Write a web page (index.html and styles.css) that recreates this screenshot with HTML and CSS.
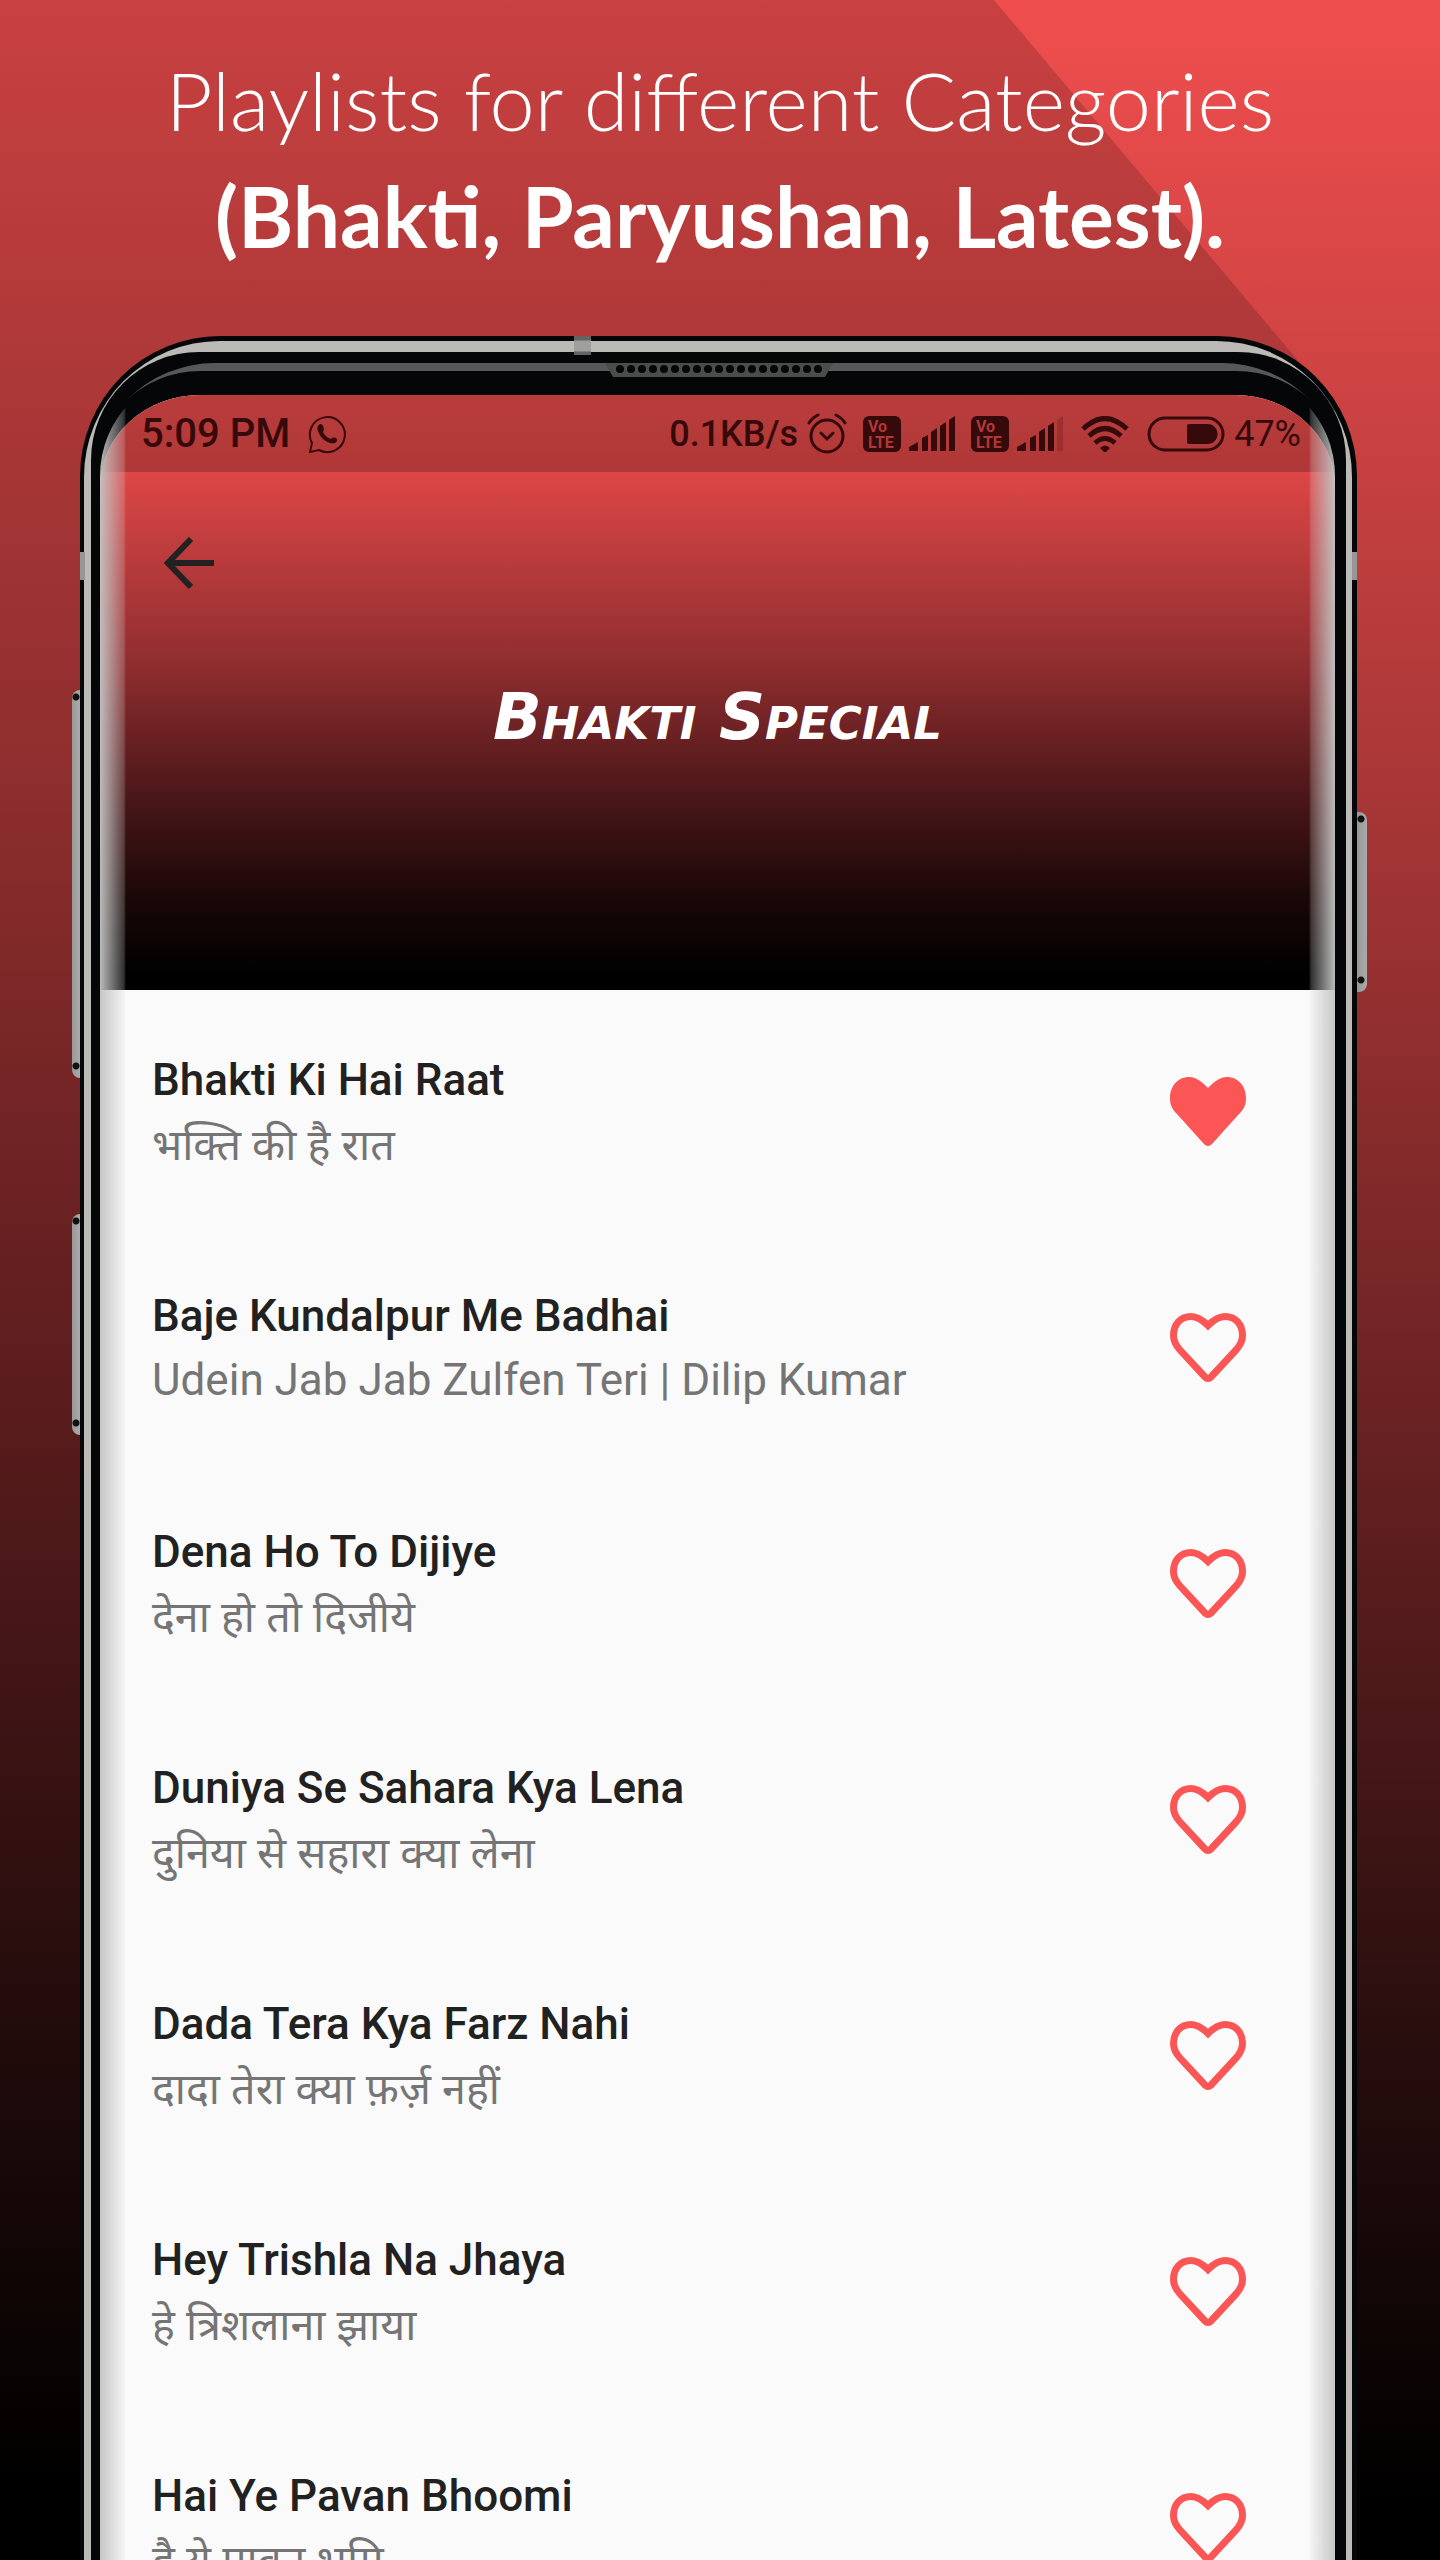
FILE: index.html
```html
<!DOCTYPE html>
<html lang="en">
<head>
<meta charset="utf-8">
<meta name="viewport" content="width=device-width, initial-scale=1">
<title>Bhakti Special</title>
<link rel="stylesheet" href="styles.css">
</head>
<body>
<svg class="defs" aria-hidden="true">
  <symbol id="heart-fill" viewBox="0 0 76 70"><path d="M38 11C31 4 26 0 19 0C8 0 0 9 0 21C0 28 2 32 7 37L34 67Q38 71 42 67L69 37C74 32 76 28 76 21C76 9 68 0 57 0C50 0 45 4 38 11Z"/></symbol>
  <symbol id="heart-line" viewBox="0 0 76 70"><path fill="none" stroke="currentColor" stroke-width="7" d="M38 12.500C32 6.500 27 3.500 21 3.500C11 3.500 3.500 11 3.500 22.500C3.500 28 5.500 32 10 37L35 64Q38 67 41 64L66 37C70.500 32 72.500 28 72.500 22.500C72.500 11 65 3.500 55 3.500C49 3.500 44 6.500 38 12.500Z"/></symbol>
</svg>
<main class="poster">
  <h1 class="headline"><span class="light">Playlists for different Categories</span><strong>(Bhakti, Paryushan, Latest).</strong></h1>
  <div class="phone">
    <i class="key key-volume"></i><i class="key key-assist"></i><i class="key key-power"></i>
    <i class="seam seam-left"></i><i class="seam seam-right"></i>
    <div class="rim"><div class="shell"><div class="gleam"><div class="bezel">
      <svg class="grille" viewBox="0 0 228 15" aria-hidden="true">
        <path fill="#4b4d4b" d="M0 0H228L220 14H8Z"/>
        <path fill="none" stroke="#050607" stroke-width="8" stroke-linecap="round" stroke-dasharray="0 11" d="M15 6H215"/>
      </svg>
      <div class="screen">
        <div class="hero">
          <div class="status">
            <span class="time">5:09 PM</span>
            <svg class="chat" viewBox="0 0 40 40" aria-hidden="true"><path fill="none" stroke="currentColor" stroke-width="2" d="M2 38L4 29A17.500 17.500 0 1 1 11 36Z"/><path fill="currentColor" d="M12 10C15 9 17 15 15 18C17 22 20 24 23 25C25 22 30 24 29 27C27 32 18 28 15 25C10 20 7 12 12 10Z"/></svg>
            <span class="rate">0.1KB/s</span>
            <svg class="alarm" viewBox="0 0 40 42" aria-hidden="true"><g fill="none" stroke="currentColor" stroke-width="3" stroke-linecap="round"><circle cx="20" cy="23" r="16"/><path d="M14 20L20 26L26 20M2 10Q5 5 11 2M38 10Q35 5 29 2"/></g></svg>
            <svg class="volte" viewBox="0 0 38 36" role="img" aria-label="VoLTE"><rect width="38" height="36" rx="6" fill="currentColor"/><text x="5" y="16">Vo</text><text x="5" y="32">LTE</text></svg>
            <svg class="bars" viewBox="0 0 46 36" aria-hidden="true"><path fill="currentColor" d="M0 35V31L9 26V35ZM13 35V22L19 19V35ZM22 35V16L28 12V35ZM31 35V10L37 6V35ZM40 35V4L46 0V35Z"/></svg>
            <svg class="volte" viewBox="0 0 38 36" role="img" aria-label="VoLTE"><rect width="38" height="36" rx="6" fill="currentColor"/><text x="5" y="16">Vo</text><text x="5" y="32">LTE</text></svg>
            <svg class="bars" viewBox="0 0 46 36" aria-hidden="true"><path fill="currentColor" d="M0 35V31L9 26V35ZM13 35V22L19 19V35ZM22 35V16L28 12V35ZM31 35V10L37 6V35Z"/><path fill="currentColor" opacity=".2" d="M40 35V4L46 0V35Z"/></svg>
            <svg class="wifi" viewBox="0 0 48 36" aria-hidden="true"><g fill="none" stroke="currentColor" stroke-width="5"><path d="M2 13Q24 -8 46 13M8 20Q24 5 40 20M14 27Q24 18 34 27"/></g><path fill="currentColor" d="M19 32Q24 27 29 32L24 37Z"/></svg>
            <svg class="battery" viewBox="0 0 78 36" aria-hidden="true"><rect x="2" y="2" width="74" height="32" rx="16" fill="none" stroke="currentColor" stroke-width="3"/><path fill="currentColor" d="M42 8H60C74 8 74 28 60 28H42Q40 28 40 26V10Q40 8 42 8Z"/></svg>
            <span class="charge">47%</span>
          </div>
          <button class="back" aria-label="Back"><svg viewBox="0 0 50 52" aria-hidden="true"><path fill="none" stroke="currentColor" stroke-width="6" d="M50 26H5M27 2L4 26L27 50"/></svg></button>
          <h2 class="title">Bhakti Special</h2>
        </div>
        <ul class="songs">
          <li class="song"><div><h3>Bhakti Ki Hai Raat</h3><p lang="hi">भक्ति की है रात</p></div><button class="like" aria-label="Unlike"><svg><use href="#heart-fill"/></svg></button></li>
          <li class="song"><div><h3>Baje Kundalpur Me Badhai</h3><p>Udein Jab Jab Zulfen Teri | Dilip Kumar</p></div><button class="like" aria-label="Like"><svg><use href="#heart-line"/></svg></button></li>
          <li class="song"><div><h3>Dena Ho To Dijiye</h3><p lang="hi">देना हो तो दिजीये</p></div><button class="like" aria-label="Like"><svg><use href="#heart-line"/></svg></button></li>
          <li class="song"><div><h3>Duniya Se Sahara Kya Lena</h3><p lang="hi">दुनिया से सहारा क्या लेना</p></div><button class="like" aria-label="Like"><svg><use href="#heart-line"/></svg></button></li>
          <li class="song"><div><h3>Dada Tera Kya Farz Nahi</h3><p lang="hi">दादा तेरा क्या फ़र्ज़ नहीं</p></div><button class="like" aria-label="Like"><svg><use href="#heart-line"/></svg></button></li>
          <li class="song"><div><h3>Hey Trishla Na Jhaya</h3><p lang="hi">हे त्रिशलाना झाया</p></div><button class="like" aria-label="Like"><svg><use href="#heart-line"/></svg></button></li>
          <li class="song"><div><h3>Hai Ye Pavan Bhoomi</h3><p lang="hi">है ये पावन भूमि</p></div><button class="like" aria-label="Like"><svg><use href="#heart-line"/></svg></button></li>
        </ul>
      </div>
      <div class="edge"></div>
    </div></div></div></div>
    <i class="seam seam-top"></i>
  </div>
</main>
</body>
</html>
```

FILE: styles.css
```css
* { box-sizing: border-box; margin: 0; padding: 0; }
body { background: #000; font-family: Roboto, "Noto Sans", sans-serif; }
svg { display: block; }
button { border: 0; background: none; color: inherit; }
.defs { position: absolute; width: 0; height: 0; }

.poster {
  position: relative;
  height: 100vh;
  overflow: hidden;
  background: linear-gradient(#f04e4e 0, #d24444 340px, #a83636 800px, #6c2223 1400px, #2c0f0f 2000px, #000 2500px);
}
.poster::before {
  content: "";
  position: absolute;
  inset: 0;
  background: rgba(0, 0, 0, .16);
  clip-path: polygon(0 0, 994px 0, 1300px 363px, 1300px 100%, 0 100%);
}

.headline {
  position: relative;
  padding-top: 42px;
  height: 336px;
  color: #fff;
  text-align: center;
  font: 400 84px/116px Lato, sans-serif;
}
.headline span, .headline strong { display: block; }
.headline .light { font-weight: 300; font-size: 81px; }
.headline strong { font-weight: 700; }

.phone {
  position: relative;
  margin: 0 83px 0 80px;
  padding: 5px 5px 0 4px;
  border-radius: 140px 140px 0 0;
  background: #050607;
}
.rim { padding: 11px 6px 0 7px; border-radius: 136px 136px 0 0; background: #bcbab7; }
.shell { padding-top: 11px; border-radius: 108px 108px 0 0; background: #050607; }
.gleam { padding-top: 8px; border-radius: 124px 124px 0 0; background: linear-gradient(#575958 24px, #050607 40px); }
.bezel { position: relative; padding: 24px 11px 0 9px; border-radius: 110px 110px 0 0; background: #050607; }
.grille { position: absolute; top: -8px; left: 50%; width: 228px; height: 15px; transform: translateX(-50%); }
.screen { border-radius: 100px 100px 0 0 / 92px 92px 0 0; overflow: hidden; background: #fafafa; }
.edge {
  position: absolute;
  inset: 0 11px 0 9px;
  border-radius: 105px 105px 0 0;
  pointer-events: none;
  background:
    linear-gradient(90deg, rgba(196, 196, 196, .95), rgba(220, 220, 220, .22) 24px, transparent 26px),
    linear-gradient(270deg, rgba(196, 196, 196, .95), rgba(220, 220, 220, .22) 24px, transparent 26px);
}

.key { position: absolute; width: 10px; background: radial-gradient(circle 4px at 4px 7px, #111 3px, transparent 4px), radial-gradient(circle 4px at 4px calc(100% - 12px), #111 3px, transparent 4px), linear-gradient(90deg, #999, #aaa); }
.key-volume, .key-assist { left: -8px; width: 8px; border-radius: 8px 0 0 8px; }
.key-volume { top: 354px; height: 388px; }
.key-assist { top: 878px; height: 221px; }
.key-power { right: -10px; top: 476px; height: 180px; border-radius: 0 8px 8px 0; }
.seam { position: absolute; width: 5px; height: 28px; background: #969696; }
.seam-top { top: 0; left: 494px; width: 17px; height: 19px; background: linear-gradient(#626362 4px, #9f9f9d 5px 15px, #626362 16px); }
.seam-left { top: 216px; left: 0; }
.seam-right { top: 216px; right: 0; }

.hero { height: 595px; color: #36090b; background: linear-gradient(#e94c4c, #dc4646 80px, #8f2d2f 270px, #4c1719 400px, #1c0808 500px, #000 580px); }
.status { display: flex; align-items: center; height: 77px; padding: 0 34px 0 41px; background: rgba(0, 0, 0, .2); font-weight: 500; font-size: 36px; }
.time { font-size: 40px; }
.chat { width: 40px; height: 40px; margin-left: 18px; }
.rate { margin-left: auto; }
.alarm { width: 40px; height: 42px; margin: 0 16px 0 9px; }
.volte { width: 38px; height: 36px; margin-right: 8px; }
.volte text { fill: #b13839; font: 700 16px Roboto, sans-serif; }
.bars { width: 46px; height: 36px; margin-right: 16px; }
.wifi { width: 48px; height: 36px; margin: 0 18px 0 2px; }
.battery { width: 78px; height: 36px; }
.charge { margin-left: 9px; font-weight: 400; }
.back { display: block; margin: 65px 0 0 64px; color: #222; }
.back svg { width: 50px; height: 52px; }
.title { margin-top: 90px; color: #fff; text-align: center; font: italic 700 64px/76px "Permanent Marker", "DejaVu Sans", sans-serif; font-variant: small-caps; }

.songs { list-style: none; padding: 4px 89px 0 52px; }
.song { display: flex; justify-content: space-between; align-items: center; height: 236px; }
.song h3 { color: #212121; font-weight: 500; font-size: 44px; line-height: 64px; }
.song p { color: #757575; font-size: 44px; line-height: 64px; }
.song p:lang(hi) { font-family: "Noto Sans", "Noto Sans Devanagari", sans-serif; font-size: 43px; }
.like { color: #fb5655; }
.like svg { width: 76px; height: 70px; fill: currentColor; }
```
